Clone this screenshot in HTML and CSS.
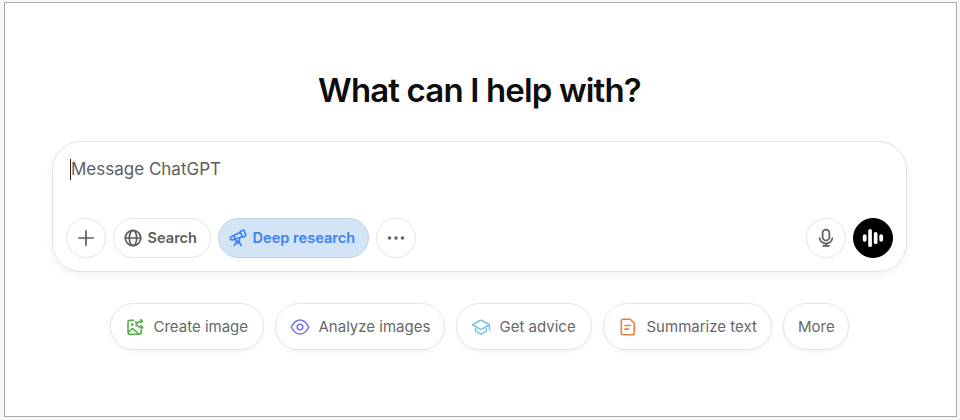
FILE: index.html
```html
<!DOCTYPE html>
<html lang="en">
<head>
    <meta charset="utf-8">
    <title>ChatGPT</title>
    <link rel="stylesheet" href="styles.css">
</head>
<body>
<div class="window">
    <h1>What can I help with?</h1>
    <div class="composer">
        <div class="message">
            <span class="caret"></span>
            <span class="placeholder">Message ChatGPT</span>
        </div>
        <div class="tools">
            <button class="tool round" aria-label="Add">
                <svg width="20" height="20" viewBox="0 0 20 20"><path d="M10 2.9v14.2M2.9 10h14.2"/></svg>
            </button>
            <button class="tool search">
                <svg width="20" height="20" viewBox="0 0 20 20"><circle cx="10" cy="10" r="7.7"/><ellipse cx="10" cy="10" rx="3.7" ry="7.7"/><path d="M2.3 10h15.4"/></svg>
                <span>Search</span>
            </button>
            <button class="tool research">
                <svg width="20" height="20" viewBox="0 0 20 20"><path d="M12.1 3.5 14.9 2.3Q16 1.9 16.4 3L17.7 6.9Q18 8 17 8.4L14.5 9.2ZM12.4 4.3 3.3 8.7Q1.9 9.5 2.4 10.8 3 12.2 4.5 11.9L8 10.9M11.6 9.7 14.2 8.8M5.8 7.6 7.1 11"/><circle cx="9.8" cy="11.8" r="1.8"/><path d="M8.8 13.4 6.4 17.4M10.8 13.4 13.2 17.4M9.8 13.8v1.8"/></svg>
                <span>Deep research</span>
            </button>
            <button class="tool round" aria-label="More tools">
                <svg class="solid" width="20" height="20" viewBox="0 0 20 20"><circle cx="3.5" cy="10" r="1.75"/><circle cx="10" cy="10" r="1.75"/><circle cx="16.5" cy="10" r="1.75"/></svg>
            </button>
            <button class="tool round mic" aria-label="Dictate">
                <svg width="20" height="20" viewBox="0 0 20 20"><rect x="6.6" y="1.7" width="6.8" height="10.6" rx="3.4"/><path d="M3.6 10.2a6.5 6.5 0 0 0 12.8 0M10 15.3v2.6M7.2 17.9h5.6"/></svg>
            </button>
            <button class="tool round voice" aria-label="Voice mode">
                <svg class="solid" width="22" height="22" viewBox="0 0 22 22"><rect x=".8" y="7.3" width="3.8" height="7.4" rx="1.9"/><rect x="6.2" y="2" width="3.7" height="18" rx="1.85"/><rect x="11.8" y="5" width="3.7" height="12" rx="1.85"/><rect x="17.3" y="7.3" width="3.8" height="7.4" rx="1.9"/></svg>
            </button>
        </div>
    </div>
    <div class="chips">
        <button class="chip create">
            <svg width="20" height="20" viewBox="0 0 20 20"><path d="M8.5 3.4H5Q3 3.4 3 5.4v9.9q0 2 2 2h9.2q2 0 2-2v-2.1M3.3 15.4l3.1-3.2q1.1-1 2.2 0l5.1 4.8M10.9 4.9Q11.3 10.3 17.2 10.4M16 8.8l1.7 1.6-1.7 1.6M11 8.3Q12.6 4.2 17 4.1M15.8 2.5l1.7 1.6-1.7 1.6"/><circle class="dot" cx="7.2" cy="7.6" r="1.4"/></svg>
            <span>Create image</span>
        </button>
        <button class="chip analyze">
            <svg width="20" height="20" viewBox="0 0 20 20"><path d="M1.2 10Q4.8 3 10 3T18.8 10Q15.2 17 10 17T1.2 10Z"/><circle cx="10" cy="10" r="2.8"/></svg>
            <span>Analyze images</span>
        </button>
        <button class="chip advice">
            <svg width="20" height="20" viewBox="0 0 20 20"><path d="M1.5 7.7 9 3.5q1-.5 2 0l7.5 4.2L11 12q-1 .5-2 0ZM4.6 9.7v4.4L9 16.7q1 .5 2 0l4.4-2.6V9.7M18.5 7.9v4.8"/></svg>
            <span>Get advice</span>
        </button>
        <button class="chip summarize">
            <svg width="20" height="20" viewBox="0 0 20 20"><path d="M5.3 2.3h6.9l4.1 4v9.4q0 2-2 2h-9q-2 0-2-2V4.3q0-2 2-2ZM6.9 8.5h5.7M6.9 12.1h3.6"/></svg>
            <span>Summarize text</span>
        </button>
        <button class="chip more"><span>More</span></button>
    </div>
</div>
</body>
</html>
```
FILE: styles.css
```css
*{
    box-sizing: border-box;
}
body{
    margin: 0;
    background-color: #f7f7f7;
    font-family: Inter, "Liberation Sans", sans-serif;
}
.window{
    width: 953px;
    height: 415px;
    margin: 2px 0 0 4px;
    padding: 67px 49px 0 47px;
    border: 1px solid #aaa;
    background-color: #fff;
    overflow: hidden;
}
h1{
    margin: 0 0 31px;
    color: #0d0d0d;
    font-size: 33px;
    font-weight: 600;
    line-height: 40px;
    letter-spacing: -0.85px;
    text-align: center;
    white-space: nowrap;
}
.composer{
    display: flex;
    flex-direction: column;
    justify-content: space-between;
    width: 855px;
    height: 131px;
    padding: 15px 13px 13px;
    border: 1px solid #e3e3e3;
    border-radius: 29px;
    box-shadow: 0 3px 9px rgba(0,0,0,.06);
}
.message{
    display: flex;
    align-items: center;
    height: 24px;
    padding-left: 4px;
    color: #5d5d5d;
    font-size: 17px;
}
.caret{
    width: 1px;
    height: 21px;
    background-color: #222;
}
.tools{
    display: flex;
    gap: 7px;
}
button{
    display: flex;
    align-items: center;
    margin: 0;
    padding: 0;
    background-color: #fff;
    font-family: inherit;
    white-space: nowrap;
}
svg{
    flex: none;
    fill: none;
    stroke: currentColor;
    stroke-width: 1.7;
    stroke-linecap: round;
    stroke-linejoin: round;
}
.solid, .dot{
    fill: currentColor;
    stroke: none;
}
.tool{
    height: 40px;
    border: 1px solid #e3e3e3;
    border-radius: 20px;
    color: #5d5d5d;
    font-size: 14.6px;
    font-weight: 600;
}
.round{
    justify-content: center;
    width: 40px;
}
.search{
    width: 98px;
    padding-left: 9px;
    gap: 4.5px;
}
.research{
    width: 151px;
    padding-left: 9px;
    gap: 4.5px;
    border-color: #bfd2e5;
    background-color: #d3e4f7;
    color: #3b82f6;
}
.mic{
    margin-left: auto;
}
.voice{
    border-color: #000;
    background-color: #000;
    color: #fff;
}
.chips{
    display: flex;
    gap: 11px;
    margin: 31px 0 0 58px;
}
.chip{
    height: 47px;
    padding-left: 14px;
    gap: 8.5px;
    border: 1px solid #e5e5e5;
    border-radius: 24px;
    box-shadow: 0 2px 5px rgba(0,0,0,.05);
    color: #676767;
    font-size: 15px;
}
.chip svg{
    stroke-width: 1.6;
}
.create{
    width: 154px;
}
.analyze{
    width: 170px;
}
.advice{
    width: 136px;
}
.summarize{
    width: 169px;
}
.more{
    width: 66px;
}
.create svg{
    color: #55b04b;
}
.analyze svg{
    color: #7678ee;
}
.advice svg{
    color: #7cc5e4;
}
.summarize svg{
    color: #e2823f;
}
```
